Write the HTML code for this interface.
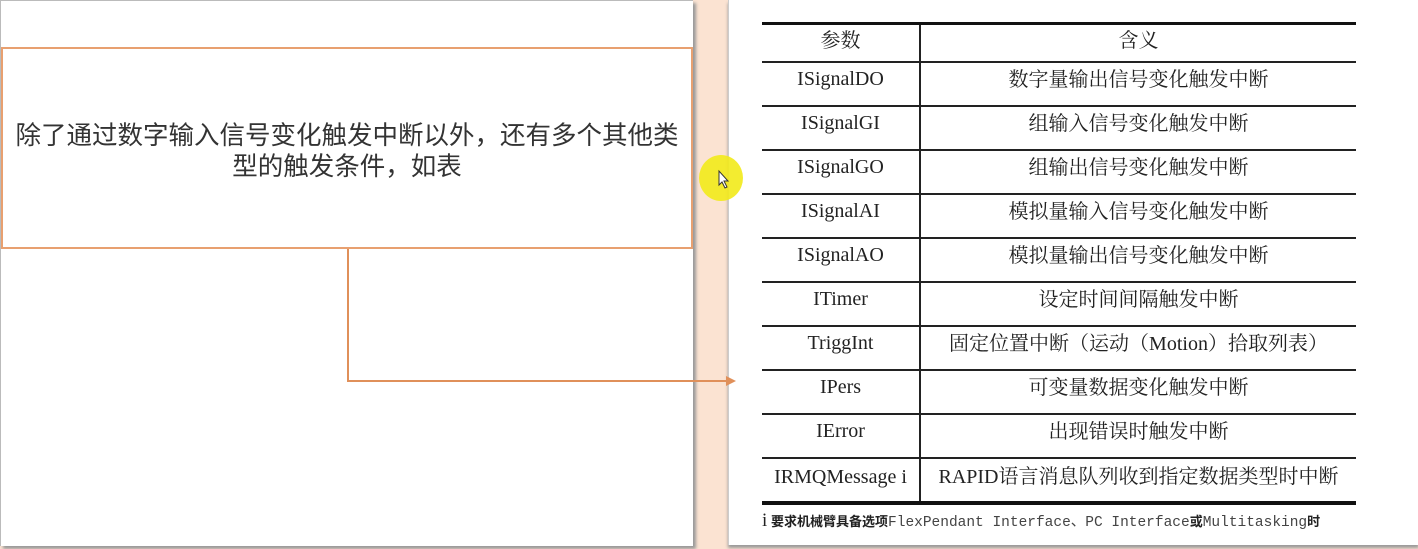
<!DOCTYPE html>
<html><head><meta charset="utf-8"><style>
body{margin:0;width:1418px;height:549px;background:#fbe3d2;position:relative;overflow:hidden;font-family:"Liberation Serif","Noto Serif CJK SC",serif}
.lp{position:absolute;left:0;top:0;width:692px;height:545px;background:#fff;border-top:1px solid #bbb;border-left:1px solid #bbb;box-shadow:3px 3px 3px #999}
.rp{position:absolute;left:728px;top:0;width:690px;height:545px;background:#fff;border-left:1px solid #ccc;box-shadow:0 3px 3px #999}
.box{position:absolute;left:1px;top:47px;width:688px;height:190px;border:2px solid #e8a070;display:flex;align-items:center;justify-content:center;text-align:center;font-family:"Liberation Sans","Noto Sans CJK SC",sans-serif;font-size:25.5px;line-height:31px;color:#333;padding-top:8px}
table{position:absolute;left:762px;top:22px;width:594px;border-collapse:collapse;font-size:20px;color:#222}
td{border-top:2px solid #222;height:44px;text-align:center;padding:0 0 8px 0;line-height:22px;box-sizing:border-box}
td:first-child{width:158px;border-right:2px solid #222;padding-bottom:9px}
tr:first-child td{border-top:3px solid #111;height:38px;padding-bottom:3px}
tr:last-child td{border-bottom:4px solid #111;height:45px;padding-bottom:6px}
.fn{position:absolute;left:762px;top:510px;font-size:15px;color:#222}
.fn .m{font-family:"Liberation Mono",monospace;font-size:14.5px;color:#444}
.fn b{font-family:'Noto Sans CJK SC',sans-serif;font-size:13px}
</style></head><body>
<div class="lp"></div>
<div class="rp"></div>
<div class="box"><div>除了通过数字输入信号变化触发中断以外，还有多个其他类<br>型的触发条件，如表</div></div>
<svg style="position:absolute;left:0;top:0" width="1418" height="549">
<polyline points="348,249 348,381 728,381" fill="none" stroke="#e0905a" stroke-width="2"/>
<polygon points="736,381 726,376 726,386" fill="#e0905a"/>
<ellipse cx="721" cy="178" rx="22" ry="23" fill="#f2ea1a" opacity="0.9"/>
<path d="M719,171 L719,185 L722,182 L725,188 L727,187 L724,181 L728,181 Z" fill="#fff" stroke="#333" stroke-width="1"/>
</svg>
<table>
<tr><td>参数</td><td>含义</td></tr>
<tr><td>ISignalDO</td><td>数字量输出信号变化触发中断</td></tr>
<tr><td>ISignalGI</td><td>组输入信号变化触发中断</td></tr>
<tr><td>ISignalGO</td><td>组输出信号变化触发中断</td></tr>
<tr><td>ISignalAI</td><td>模拟量输入信号变化触发中断</td></tr>
<tr><td>ISignalAO</td><td>模拟量输出信号变化触发中断</td></tr>
<tr><td>ITimer</td><td>设定时间间隔触发中断</td></tr>
<tr><td>TriggInt</td><td>固定位置中断（运动（Motion）拾取列表）</td></tr>
<tr><td>IPers</td><td>可变量数据变化触发中断</td></tr>
<tr><td>IError</td><td>出现错误时触发中断</td></tr>
<tr><td>IRMQMessage i</td><td>RAPID语言消息队列收到指定数据类型时中断</td></tr>
</table>
<div class="fn"><span style="font-size:19px">i</span> <b>要求机械臂具备选项</b><span class="m">FlexPendant Interface、PC Interface</span><b>或</b><span class="m">Multitasking</span><b>时</b></div>
</body></html>
